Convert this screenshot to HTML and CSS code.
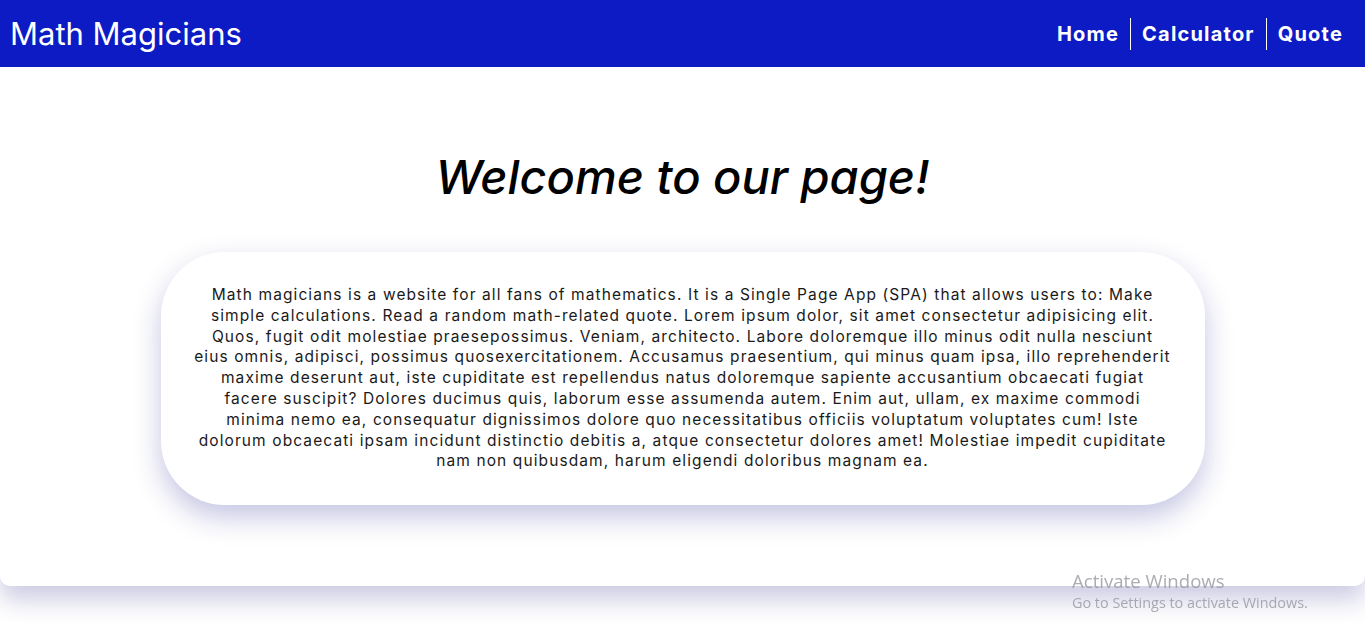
FILE: index.html
```html
<!DOCTYPE html>
<html lang="en">
<head>
<meta charset="utf-8">
<title>Math Magicians</title>
<link rel="stylesheet" href="styles.css">
</head>
<body>
<div class="page">
  <header class="navbar">
    <h1 class="logo">Math Magicians</h1>
    <nav class="links">
      <a href="#" class="link">Home</a>
      <a href="#" class="link">Calculator</a>
      <a href="#" class="link">Quote</a>
    </nav>
  </header>
  <main class="home">
    <h2 class="title">Welcome to our page!</h2>
    <div class="card">
      <p class="text">Math magicians is a website for all fans of mathematics. It is a Single Page App (SPA) that allows users to: Make simple calculations. Read a random math-related quote. Lorem ipsum dolor, sit amet consectetur adipisicing elit. Quos, fugit odit molestiae praesepossimus. Veniam, architecto. Labore doloremque illo minus odit nulla nesciunt eius omnis, adipisci, possimus quosexercitationem. Accusamus praesentium, qui minus quam ipsa, illo reprehenderit maxime deserunt aut, iste cupiditate est repellendus natus doloremque sapiente accusantium obcaecati fugiat facere suscipit? Dolores ducimus quis, laborum esse assumenda autem. Enim aut, ullam, ex maxime commodi minima nemo ea, consequatur dignissimos dolore quo necessitatibus officiis voluptatum voluptates cum! Iste dolorum obcaecati ipsam incidunt distinctio debitis a, atque consectetur dolores amet! Molestiae impedit cupiditate nam non quibusdam, harum eligendi doloribus magnam ea.</p>
    </div>
  </main>
</div>
<div class="watermark">
  <div class="wm-title">Activate Windows</div>
  <div class="wm-sub">Go to Settings to activate Windows.</div>
</div>
</body>
</html>
```
FILE: styles.css
```css
* { box-sizing: border-box; }
html, body { margin: 0; padding: 0; background: #fff; }
body { font-family: Inter, "Noto Sans", sans-serif; overflow: hidden; height: 636px; }

.page {
  background: #fff;
  border-radius: 0 0 10px 10px;
  box-shadow: 0 14px 24px rgba(40, 40, 140, 0.24);
  height: 586px;
}

.navbar {
  height: 67px;
  background: #0c1bc4;
  display: flex;
  align-items: center;
  justify-content: space-between;
  padding: 0 10px 0 10px;
}
.logo {
  margin: 0;
  color: #fff;
  font-size: 31px;
  font-weight: 400;
  letter-spacing: 0;
}
.links { display: flex; align-items: center; padding-right: 1px; }
.link {
  color: #fff;
  text-decoration: none;
  font-weight: 700;
  font-size: 20px;
  letter-spacing: 1.2px;
  padding: 3px 11px;
  line-height: 26px;
  border-left: 1px solid #fff;
}
.link:first-child { border-left: none; }

.home {
  display: flex;
  flex-direction: column;
  align-items: center;
  padding-top: 80px;
}
.title {
  margin: 0;
  font-size: 47px;
  font-style: italic;
  font-weight: 500;
  line-height: 60px;
  color: #000;
}
.card {
  margin-top: 45px;
  width: 1044px;
  height: 253px;
  border-radius: 64px;
  background: #fff;
  box-shadow: 0 12px 28px rgba(40, 40, 150, 0.27);
  padding: 33px 33px;
}
.text {
  margin: 0;
  text-align: center;
  font-size: 15.5px;
  line-height: 20.8px;
  letter-spacing: 1.1px;
  color: #1a1a1a;
}

.watermark {
  position: fixed;
  left: 1072px;
  top: 570px;
  color: rgba(150, 150, 160, 0.8);
  font-family: "Open Sans", sans-serif;
}
.wm-title { font-size: 18.6px; line-height: 22px; }
.wm-sub { font-size: 14.4px; line-height: 22px; }
```
